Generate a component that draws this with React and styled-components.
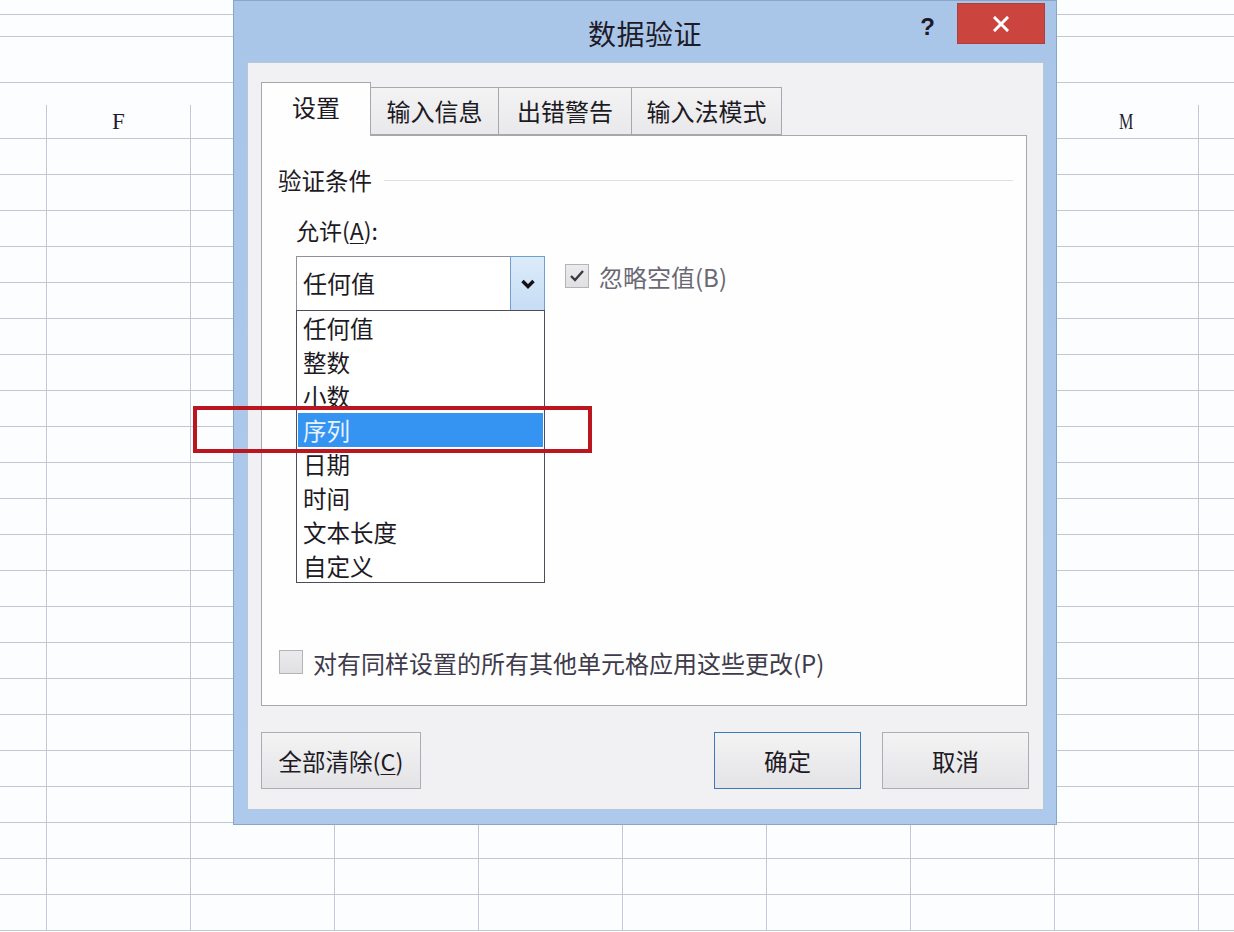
import React from "react";
import styled, { createGlobalStyle } from "styled-components";

const CJK = `"Noto Sans CJK SC", "Microsoft YaHei", "Noto Sans", sans-serif`;

const GlobalStyle = createGlobalStyle`
  html, body { margin: 0; padding: 0; }
  body {
    width: 1234px;
    height: 932px;
    overflow: hidden;
    background: #fcfdff;
    font-family: ${CJK};
    color: #1d1a24;
  }
  * { box-sizing: border-box; }
`;

const Screen = styled.div`
  position: relative;
  width: 1234px;
  height: 932px;
  overflow: hidden;
`;

/* ---------- spreadsheet background ---------- */
const Sheet = styled.div`
  display: flex;
  flex-direction: column;
  width: 100%;
`;

const Band = styled.div`
  height: ${(p) => p.$h}px;
  border-bottom: ${(p) => (p.$line ? "1px solid #c3c7d1" : "none")};
`;

const GridRow = styled.div`
  display: grid;
  grid-template-columns: 47px repeat(8, 144px) 1fr;
  height: ${(p) => p.$h}px;
  border-bottom: 1px solid #c3c7d1;
`;

const Cell = styled.div`
  border-right: ${(p) => (p.$last ? "none" : "1px solid #c6c9d3")};
  display: flex;
  align-items: center;
  justify-content: center;
`;

const ColLetter = styled.span`
  font-family: "Liberation Serif", "DejaVu Serif", serif;
  font-size: 23px;
  color: #241d33;
  line-height: 1;
  transform: scaleX(${(p) => p.$sx});
`;

/* ---------- dialog ---------- */
const Dialog = styled.div`
  position: absolute;
  left: 233px;
  top: 0;
  width: 824px;
  height: 825px;
  background: linear-gradient(#a9c6e9, #adcaec);
  border: 1px solid #8aa5c6;
  display: flex;
  flex-direction: column;
`;

const TitleBar = styled.div`
  height: 61px;
  display: grid;
  grid-template-columns: 1fr auto 1fr;
  align-items: start;
`;

const Title = styled.div`
  grid-column: 2;
  font-size: 28px;
  line-height: 30px;
  padding-top: 17px;
  color: #1e1b28;
  letter-spacing: 0.5px;
`;

const TitleControls = styled.div`
  grid-column: 3;
  display: flex;
  justify-content: flex-end;
  align-items: flex-start;
  gap: 22px;
  padding: 2px 11px 0 0;
`;

const HelpMark = styled.span`
  font-family: "Liberation Sans", Arial, sans-serif;
  font-weight: 700;
  font-size: 24px;
  line-height: 24px;
  margin-top: 12px;
  color: #1c1a2a;
`;

const CloseButton = styled.div`
  width: 88px;
  height: 41px;
  background: #cb443d;
  border: 1px solid #a9423f;
  display: flex;
  align-items: center;
  justify-content: center;
`;

const Client = styled.div`
  flex: 1;
  margin: 0 12px 14px 13px;
  background: #f1f1f3;
  border: 1px solid #b7c7da;
  display: flex;
  flex-direction: column;
  padding: 19px 16px 20px 13px;
`;

const TabStrip = styled.div`
  display: flex;
  align-items: flex-end;
  height: 53px;
  position: relative;
  z-index: 1;
`;

const Tab = styled.div`
  height: ${(p) => (p.$active ? 54 : 48)}px;
  margin-bottom: ${(p) => (p.$active ? -1 : 0)}px;
  margin-left: -1px;
  &:first-child { margin-left: 0; }
  width: ${(p) => p.$w}px;
  border: 1px solid #a7a7ad;
  border-bottom: ${(p) => (p.$active ? "none" : "1px solid #a7a7ad")};
  background: ${(p) => (p.$active ? "#fefeff" : "linear-gradient(#f3f3f4, #e9e9eb)")};
  font-size: 24px;
  line-height: 30px;
  display: flex;
  align-items: center;
  justify-content: center;
  padding-bottom: ${(p) => (p.$active ? 6 : 0)}px;
  color: #1d1a24;
`;

const TabPanel = styled.div`
  height: 571px;
  background: #fefeff;
  border: 1px solid #a7a7ad;
  display: flex;
  flex-direction: column;
  padding: 29px 13px 28px 16px;
`;

const GroupHeader = styled.div`
  display: flex;
  align-items: center;
  gap: 12px;
  font-size: 23.5px;
  line-height: 30px;
`;

const Rule = styled.div`
  flex: 1;
  height: 1px;
  background: #d9e0e6;
`;

const FieldLabel = styled.div`
  margin: 20px 0 0 18px;
  font-size: 23px;
  line-height: 30px;
  u { text-decoration-thickness: 1px; text-underline-offset: 3px; }
`;

const SelectRow = styled.div`
  display: flex;
  align-items: flex-start;
  gap: 20px;
  margin: 11px 0 0 18px;
`;

const SelectWrap = styled.div`
  position: relative;
  width: 249px;
`;

const SelectBox = styled.div`
  height: 55px;
  border: 1px solid #8f909c;
  background: #ffffff;
  display: flex;
  align-items: stretch;
`;

const SelectValue = styled.div`
  flex: 1;
  display: flex;
  align-items: center;
  padding-left: 6px;
  font-size: 24px;
  padding-bottom: 2px;
`;

const DropButton = styled.div`
  width: 35px;
  margin: -1px -1px -1px 0;
  border: 1px solid #6f9fd0;
  background: linear-gradient(#dcebfa, #c6ddf4);
  display: flex;
  align-items: center;
  justify-content: center;
`;

const DropList = styled.div`
  position: absolute;
  top: 100%;
  left: 0;
  width: 249px;
  height: 273px;
  margin-top: -1px;
  background: #ffffff;
  border: 1px solid #4e4c5e;
  z-index: 2;
`;

const DropItem = styled.div`
  height: 34px;
  margin: 0 1px;
  padding-left: 5px;
  display: flex;
  align-items: center;
  font-size: 23.5px;
  background: ${(p) => (p.$selected ? "#3594f2" : "transparent")};
  color: ${(p) => (p.$selected ? "#e8f3ff" : "#1d1a24")};
`;

const CheckLabel = styled.label`
  display: flex;
  align-items: center;
  gap: 10px;
  height: 30px;
  margin-top: ${(p) => p.$mt || 0}px;
  font-size: 24px;
  color: ${(p) => p.$color};
`;

const CheckBox = styled.span`
  width: 24px;
  height: 24px;
  flex: none;
  border: 1px solid #b3b3b8;
  background: linear-gradient(#ebebed, #e0e0e3);
  display: flex;
  align-items: center;
  justify-content: center;
`;

const BottomCheck = styled(CheckLabel)`
  margin-top: auto;
  margin-left: 1px;
`;

const ButtonRow = styled.div`
  display: flex;
  gap: 21px;
  margin: 26px -2px 0 0;
`;

const Button = styled.div`
  height: 57px;
  width: ${(p) => p.$w}px;
  margin-left: ${(p) => (p.$push ? "auto" : "0")};
  border: 1px solid ${(p) => (p.$default ? "#3d7ab5" : "#acacb2")};
  background: linear-gradient(#f3f3f4, #e4e4e7);
  font-size: 23.5px;
  display: flex;
  align-items: center;
  justify-content: center;
  color: #1d1a24;
  u { text-decoration-thickness: 1px; text-underline-offset: 3px; }
`;

const Highlight = styled.div`
  position: absolute;
  left: 193px;
  top: 406px;
  width: 399px;
  height: 47px;
  border: 4px solid #bb1620;
  z-index: 5;
`;

const columns = ["", "F", "G", "H", "I", "J", "K", "L", "M", ""];
const letterScale = { F: 1, M: 0.7 };
const items = ["任何值", "整数", "小数", "序列", "日期", "时间", "文本长度", "自定义"];

function Row({ h, header }) {
  return (
    <GridRow $h={h}>
      {columns.map((c, i) => (
        <Cell key={i} $last={i === columns.length - 1}>
          {header && letterScale[c] ? <ColLetter $sx={letterScale[c]}>{c}</ColLetter> : null}
        </Cell>
      ))}
    </GridRow>
  );
}

export default function App() {
  const dataRows = Array.from({ length: 22 });
  return (
    <>
      <GlobalStyle />
      <Screen>
        <Sheet>
          <Band $h={15} $line />
          <Band $h={22} $line />
          <Band $h={46} $line />
          <Band $h={22} />
          <Row h={34} header />
          {dataRows.map((_, i) => (
            <Row key={i} h={36} />
          ))}
        </Sheet>

        <Dialog>
          <TitleBar>
            <Title>数据验证</Title>
            <TitleControls>
              <HelpMark>?</HelpMark>
              <CloseButton>
                <svg width="16" height="16" viewBox="0 0 16 16">
                  <path d="M2 2 L14 14 M14 2 L2 14" stroke="#ffffff" strokeWidth="3" strokeLinecap="square" />
                </svg>
              </CloseButton>
            </TitleControls>
          </TitleBar>

          <Client>
            <TabStrip>
              <Tab $active $w={110}>设置</Tab>
              <Tab $w={129}>输入信息</Tab>
              <Tab $w={134}>出错警告</Tab>
              <Tab $w={151}>输入法模式</Tab>
            </TabStrip>
            <TabPanel>
              <GroupHeader>
                <span>验证条件</span>
                <Rule />
              </GroupHeader>
              <FieldLabel>
                允许(<u>A</u>):
              </FieldLabel>
              <SelectRow>
                <SelectWrap>
                  <SelectBox>
                    <SelectValue>任何值</SelectValue>
                    <DropButton>
                      <svg width="16" height="12" viewBox="0 0 16 12">
                        <polyline points="2.5,3 8,8.5 13.5,3" fill="none" stroke="#141218" strokeWidth="3.4" />
                      </svg>
                    </DropButton>
                  </SelectBox>
                  <DropList>
                    {items.map((it) => (
                      <DropItem key={it} $selected={it === "序列"}>
                        {it}
                      </DropItem>
                    ))}
                  </DropList>
                </SelectWrap>
                <CheckLabel $color="#6b6874" $mt={5}>
                  <CheckBox>
                    <svg width="16" height="14" viewBox="0 0 16 14">
                      <polyline points="2,7 6,11 14,2" fill="none" stroke="#3b3a40" strokeWidth="2.4" />
                    </svg>
                  </CheckBox>
                  忽略空值(B)
                </CheckLabel>
              </SelectRow>
              <BottomCheck $color="#3f3b4a">
                <CheckBox />
                对有同样设置的所有其他单元格应用这些更改(P)
              </BottomCheck>
            </TabPanel>
            <ButtonRow>
              <Button $w={160}>
                全部清除(<u>C</u>)
              </Button>
              <Button $w={147} $push $default>
                确定
              </Button>
              <Button $w={147}>取消</Button>
            </ButtonRow>
          </Client>
        </Dialog>

        <Highlight />
      </Screen>
    </>
  );
}
